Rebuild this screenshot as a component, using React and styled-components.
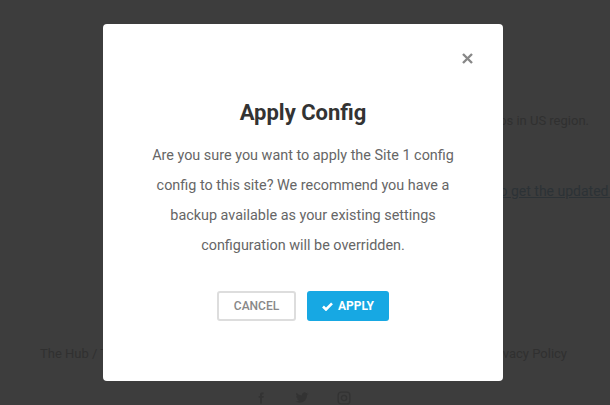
import React from "react";
import styled, { createGlobalStyle } from "styled-components";

const Global = createGlobalStyle`
  html, body { margin: 0; padding: 0; }
  body {
    background: #3d3d3d;
    font-family: Roboto, "Liberation Sans", Arial, sans-serif;
    overflow: hidden;
  }
`;

const Page = styled.div`
  width: 610px;
  height: 405px;
  overflow: hidden;
  display: flex;
  flex-direction: column;
  color: #303030;
  font-size: 13px;
`;

const Notice = styled.p`
  margin: 112px 0 0;
  padding-right: 21px;
  text-align: right;
  white-space: nowrap;
  line-height: 18px;
`;

const LinkLine = styled.p`
  margin: 52px 0 0;
  padding-left: 324px;
  white-space: nowrap;
  overflow: hidden;
  line-height: 18px;
  font-size: 14px;
  a { color: #2c3236; text-decoration: underline; }
`;

const Footer = styled.div`
  margin-top: 145px;
  padding: 0 43px 0 40px;
  display: flex;
  justify-content: space-between;
  line-height: 18px;
`;

const Social = styled.div`
  margin-top: 28px;
  display: flex;
  justify-content: center;
  gap: 28px;
  padding-right: 4px;
  svg { display: block; }
`;

const Overlay = styled.div`
  position: fixed;
  inset: 0;
  padding-right: 4px;
  display: flex;
  align-items: center;
  justify-content: center;
`;

const Modal = styled.div`
  width: 400px;
  height: 357px;
  box-sizing: border-box;
  background: #fff;
  border-radius: 4px;
  padding: 24px 26px 0;
  display: flex;
  flex-direction: column;
  align-items: center;
`;

const CloseRow = styled.div`
  align-self: stretch;
  display: flex;
  justify-content: flex-end;
`;

const CloseButton = styled.button`
  width: 20px;
  height: 20px;
  padding: 0;
  border: 0;
  background: transparent;
  display: flex;
  align-items: center;
  justify-content: center;
  color: #888;
  cursor: pointer;
`;

const Title = styled.h2`
  margin: 30px 0 0;
  font-size: 22px;
  line-height: 30px;
  font-weight: 700;
  color: #333;
`;

const Body = styled.p`
  margin: 13px 0 0;
  width: 320px;
  text-align: center;
  font-size: 14.4px;
  line-height: 30px;
  color: #666;
`;

const Actions = styled.div`
  margin-top: 30px;
  display: flex;
  gap: 11px;
`;

const Button = styled.button`
  height: 30px;
  box-sizing: border-box;
  border-radius: 3px;
  font-family: Roboto, "Liberation Sans", Arial, sans-serif;
  font-size: 12px;
  text-transform: uppercase;
  display: flex;
  align-items: center;
  justify-content: center;
  gap: 5px;
  cursor: pointer;
  border: ${p => (p.$primary ? "0" : "2px solid #ddd")};
  background: ${p => (p.$primary ? "#17a8e3" : "#fff")};
  color: ${p => (p.$primary ? "#fff" : "#888")};
  width: ${p => p.$w}px;
  font-weight: ${p => (p.$primary ? 700 : 500)};
`;

export default function App() {
  return (
    <>
      <Global />
      <Page>
        <Notice>Your sites are stored with daily backups in US region.</Notice>
        <LinkLine>
          <a href="#">Please update your plugins to get the updated features</a>
        </LinkLine>
        <Footer>
          <span>The Hub / The Terms of Service</span>
          <span>Privacy Policy</span>
        </Footer>
        <Social>
          <svg width="12" height="14" viewBox="0 0 24 24" fill="#333"><path d="M14 8V6c0-1 .5-1.5 1.5-1.5H17V1h-3c-3 0-4 2-4 4.5V8H7.5v3.5H10V23h4V11.5h3l.5-3.5z" /></svg>
          <svg width="14" height="14" viewBox="0 0 24 24" fill="#333"><path d="M23 4.5c-.8.4-1.7.6-2.6.7.9-.6 1.6-1.4 2-2.5-.9.5-1.9.9-2.9 1.1A4.5 4.5 0 0 0 11.8 7.9 12.8 12.8 0 0 1 2.5 3.2a4.5 4.5 0 0 0 1.4 6 4.4 4.4 0 0 1-2-.6c0 2.2 1.5 4 3.600 4.4-.7.2-1.4.2-2 .1.6 1.8 2.2 3.1 4.2 3.1A9 9 0 0 1 1 18.1 12.8 12.8 0 0 0 7.9 20c8.3 0 12.8-6.9 12.8-12.8v-.6c.9-.6 1.7-1.4 2.3-2.1z" /></svg>
          <svg width="14" height="14" viewBox="0 0 24 24" fill="none" stroke="#333" strokeWidth="2.4"><rect x="2" y="2" width="20" height="20" rx="5" /><circle cx="12" cy="12" r="4.5" /></svg>
        </Social>
      </Page>
      <Overlay>
        <Modal role="dialog" aria-label="Apply Config">
          <CloseRow>
            <CloseButton aria-label="Close">
              <svg width="11" height="11" viewBox="0 0 11 11" stroke="currentColor" strokeWidth="2.4">
                <path d="M1 1L10 10M10 1L1 10" />
              </svg>
            </CloseButton>
          </CloseRow>
          <Title>Apply Config</Title>
          <Body>
            Are you sure you want to apply the Site 1 config config to this site? We
            recommend you have a backup available as your existing settings
            configuration will be overridden.
          </Body>
          <Actions>
            <Button $w={79}>Cancel</Button>
            <Button $primary $w={82}>
              <svg width="11" height="9" viewBox="0 0 11 9" fill="none" stroke="#fff" strokeWidth="2.6">
                <path d="M1 4.5L4 7.5L10 1.3" />
              </svg>
              Apply
            </Button>
          </Actions>
        </Modal>
      </Overlay>
    </>
  );
}
